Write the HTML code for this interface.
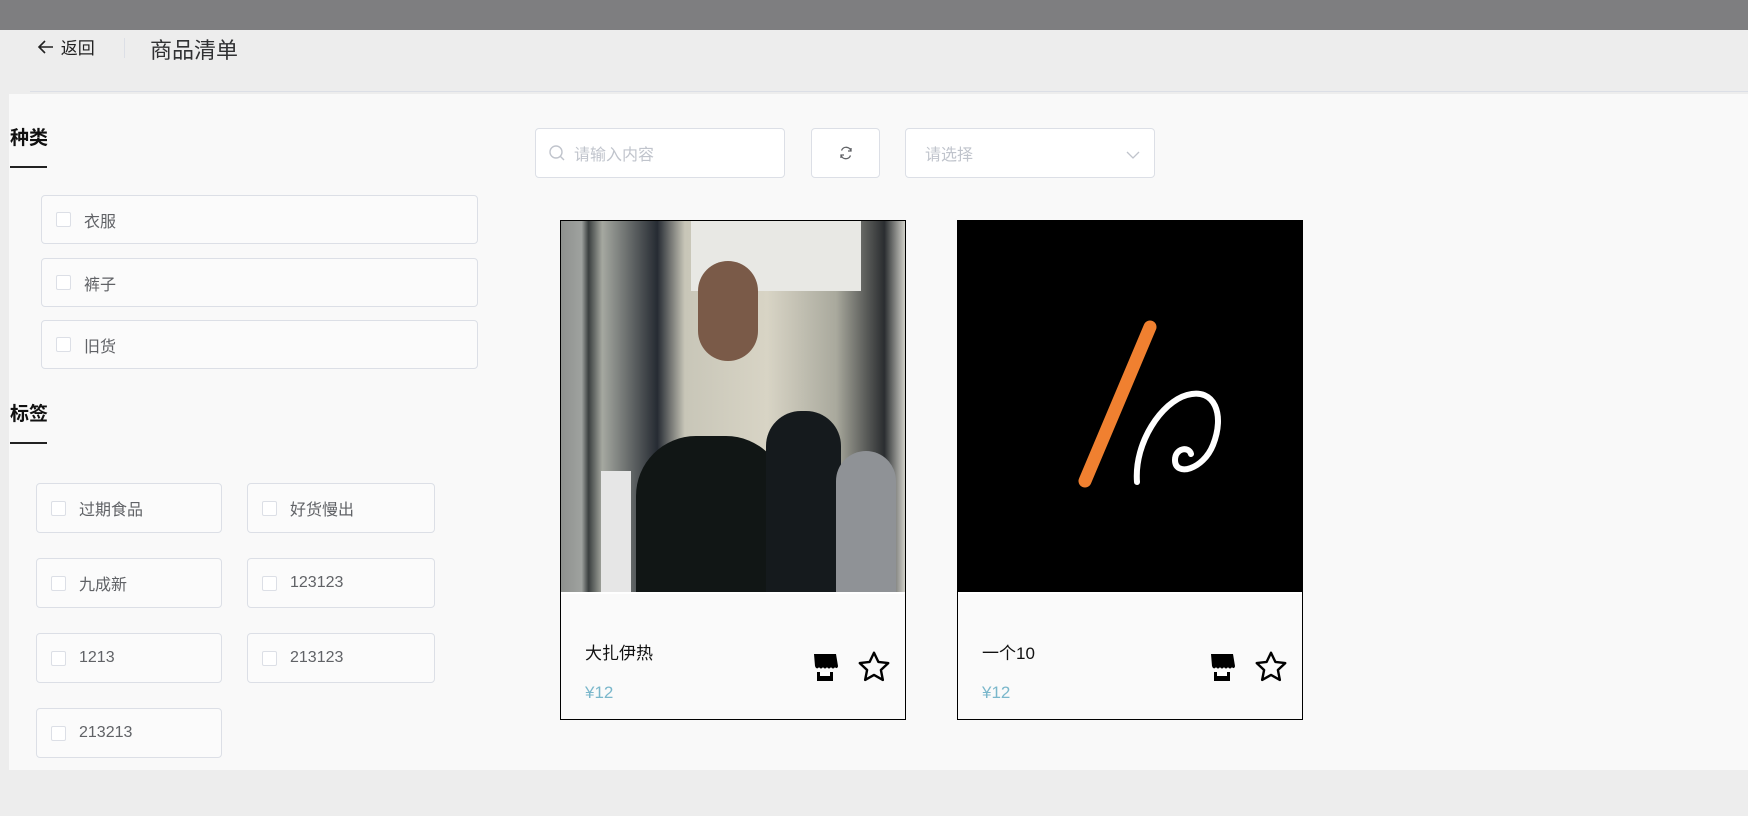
<!DOCTYPE html>
<html><head><meta charset="utf-8"><style>
*{margin:0;padding:0;box-sizing:border-box}
body{width:1748px;height:816px;overflow:hidden;background:#ededed;font-family:"Liberation Sans","Noto Sans CJK SC",sans-serif;position:relative}
.abs{position:absolute}
.top{left:0;top:0;width:1748px;height:30px;background:#7e7e80}
.hdrline{left:30px;top:91px;width:1718px;height:1px;background:#dcdfe6}
.panel{left:9px;top:94px;width:1739px;height:676px;background:#f9f9f9}
.h{font-weight:bold;font-size:19px;color:#111}
.ul{height:2px;width:37px;background:#222}
.box{border:1px solid #dcdfe6;border-radius:4px;background:rgba(255,255,255,.3);font-size:16px;color:#606266;display:flex;align-items:center}
.cb{width:15px;height:15px;border:1px solid #dcdfe6;border-radius:2px;background:#fff;margin:0 13px 0 14px}
.inp{border:1px solid #dcdfe6;border-radius:4px;background:#fff;color:#c0c4cc;font-size:16px;display:flex;align-items:center}
.card{border:1px solid #000;background:#fafafa}
.name{font-size:17px;color:#111}
.price{font-size:17px;color:#7ab7cb}
</style></head><body>
<div class="abs top"></div>
<div class="abs" style="left:36px;top:34px;font-size:17px;color:#222">
<svg width="20" height="20" viewBox="0 0 20 20" style="vertical-align:-3px"><path d="M17 10H3M9 4L3 10l6 6" fill="none" stroke="#222" stroke-width="1.6"/></svg> 返回</div>
<div class="abs" style="left:124px;top:38px;width:1px;height:20px;background:#dcdfe6"></div>
<div class="abs" style="left:150px;top:33px;font-size:22px;color:#303133">商品清单</div>
<div class="abs hdrline"></div>
<div class="abs panel"></div>

<div class="abs h" style="left:10px;top:123px">种类</div>
<div class="abs ul" style="left:10px;top:166px"></div>
<div class="abs box" style="left:41px;top:195px;width:437px;height:49px"><div class="cb"></div>衣服</div>
<div class="abs box" style="left:41px;top:258px;width:437px;height:49px"><div class="cb"></div>裤子</div>
<div class="abs box" style="left:41px;top:320px;width:437px;height:49px"><div class="cb"></div>旧货</div>

<div class="abs h" style="left:10px;top:399px">标签</div>
<div class="abs ul" style="left:10px;top:442px"></div>
<div class="abs box" style="left:36px;top:483px;width:186px;height:50px"><div class="cb"></div>过期食品</div>
<div class="abs box" style="left:247px;top:483px;width:188px;height:50px"><div class="cb"></div>好货慢出</div>
<div class="abs box" style="left:36px;top:558px;width:186px;height:50px"><div class="cb"></div>九成新</div>
<div class="abs box" style="left:247px;top:558px;width:188px;height:50px"><div class="cb"></div>123123</div>
<div class="abs box" style="left:36px;top:633px;width:186px;height:50px"><div class="cb"></div>1213</div>
<div class="abs box" style="left:247px;top:633px;width:188px;height:50px"><div class="cb"></div>213123</div>
<div class="abs box" style="left:36px;top:708px;width:186px;height:50px"><div class="cb"></div>213213</div>

<div class="abs inp" style="left:535px;top:128px;width:250px;height:50px">
<svg width="18" height="18" viewBox="0 0 18 18" style="margin:0 8px 0 12px"><circle cx="8" cy="8" r="6" fill="none" stroke="#c0c4cc" stroke-width="1.4"/><path d="M12.5 12.5L16 16" stroke="#c0c4cc" stroke-width="1.4"/></svg>请输入内容</div>
<div class="abs inp" style="left:811px;top:128px;width:69px;height:50px;justify-content:center">
<svg width="14" height="14" viewBox="0 0 14 14"><path d="M12 5A5 5 0 0 0 2.5 4.5M2 9a5 5 0 0 0 9.5.5" fill="none" stroke="#606266" stroke-width="1.3"/><path d="M12 2v3H9M2 12V9h3" fill="none" stroke="#606266" stroke-width="1.3"/></svg></div>
<div class="abs inp" style="left:905px;top:128px;width:250px;height:50px;padding-left:19px">请选择
<svg width="14" height="10" viewBox="0 0 14 10" style="position:absolute;right:14px;top:21px"><path d="M1 2l6 6 6-6" fill="none" stroke="#c0c4cc" stroke-width="1.3"/></svg></div>

<div class="abs card" style="left:560px;top:220px;width:346px;height:500px">
<div style="position:absolute;left:0;top:0;width:344px;height:373px;background:linear-gradient(90deg,#8e918e 0,#9fa29f 6%,#3a3f3f 8%,#a5a8a0 12%,#262b33 28%,#c8c6b8 36%,#d8d4c5 60%,#a9a99d 80%,#2a2d30 94%,#d0d0c8 100%);overflow:hidden;border-bottom:2px solid #fff">
<div style="position:absolute;left:130px;top:0;width:170px;height:70px;background:#e8e8e4"></div>
<div style="position:absolute;left:75px;top:215px;width:150px;height:160px;background:#111615;border-radius:60px 60px 0 0"></div>
<div style="position:absolute;left:137px;top:40px;width:60px;height:100px;background:#7a5a48;border-radius:30px"></div>
<div style="position:absolute;left:205px;top:190px;width:75px;height:185px;background:#151a1d;border-radius:35px 35px 0 0"></div>
<div style="position:absolute;left:275px;top:230px;width:60px;height:145px;background:#8f9296;border-radius:30px 30px 0 0"></div>
<div style="position:absolute;left:40px;top:250px;width:30px;height:123px;background:#e6e6e6"></div>
</div>
<div class="abs name" style="left:24px;top:418px">大扎伊热</div>
<div class="abs price" style="left:24px;top:462px">¥12</div>
<svg class="abs" style="left:247px;top:430px" width="34" height="34" viewBox="0 0 34 34"><path d="M6 3h22l2 12c0 2-2 3-3 1-1 2-3 2-4 0-1 2-3 2-4 0-1 2-3 2-4 0-1 2-3 2-4 0-1 2-3 2-4-1z" fill="#000"/><path d="M9 21h16v9H9z" fill="#000"/><path d="M12 21h10v4H12z" fill="#fff"/></svg>
<svg class="abs" style="left:295px;top:428px" width="36" height="36" viewBox="0 0 24 24"><path d="M12 2.5l2.9 6.1 6.6.8-4.9 4.6 1.3 6.6L12 17.3l-5.9 3.3 1.3-6.6-4.9-4.6 6.6-.8z" fill="none" stroke="#000" stroke-width="1.6" stroke-linejoin="round"/></svg>
</div>

<div class="abs card" style="left:957px;top:220px;width:346px;height:500px">
<div style="position:absolute;left:0;top:0;width:344px;height:373px;background:#000;border-bottom:2px solid #fff">
<svg width="344" height="373"><path d="M192 106L127 260" stroke="#f08030" stroke-width="13" stroke-linecap="round"/><path d="M179 261c-3-40 25-80 50-87 28-8 38 20 26 50-10 25-38 32-38 15 0-12 14-14 16-6" fill="none" stroke="#fff" stroke-width="6" stroke-linecap="round"/></svg>
</div>
<div class="abs name" style="left:24px;top:418px">一个10</div>
<div class="abs price" style="left:24px;top:462px">¥12</div>
<svg class="abs" style="left:247px;top:430px" width="34" height="34" viewBox="0 0 34 34"><path d="M6 3h22l2 12c0 2-2 3-3 1-1 2-3 2-4 0-1 2-3 2-4 0-1 2-3 2-4 0-1 2-3 2-4 0-1 2-3 2-4-1z" fill="#000"/><path d="M9 21h16v9H9z" fill="#000"/><path d="M12 21h10v4H12z" fill="#fff"/></svg>
<svg class="abs" style="left:295px;top:428px" width="36" height="36" viewBox="0 0 24 24"><path d="M12 2.5l2.9 6.1 6.6.8-4.9 4.6 1.3 6.6L12 17.3l-5.9 3.3 1.3-6.6-4.9-4.6 6.6-.8z" fill="none" stroke="#000" stroke-width="1.6" stroke-linejoin="round"/></svg>
</div>
</body></html>
